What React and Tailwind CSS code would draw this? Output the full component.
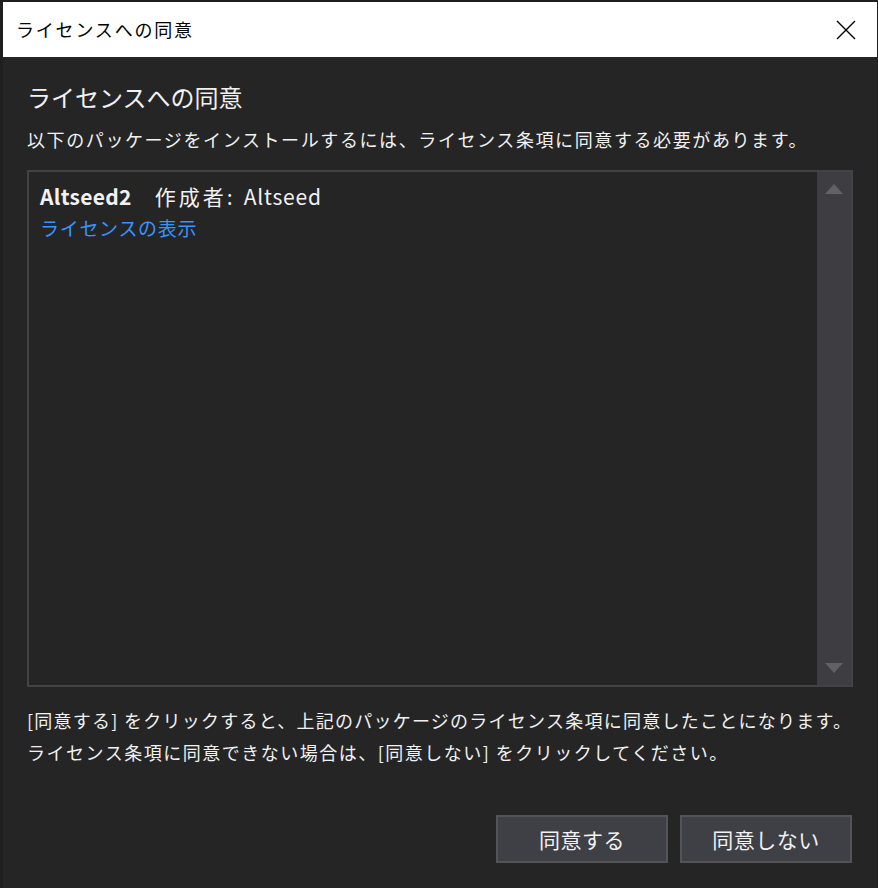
import React from 'react';

const jp = { fontFamily: '"Noto Sans CJK JP", "Noto Sans", sans-serif' };

const Triangle = ({ down }) => (
  <svg width="18" height="10" viewBox="0 0 18 10" className="block">
    <polygon points={down ? '0,0 18,0 9,10' : '9,0 18,10 0,10'} fill="#626266" />
  </svg>
);

const Button = ({ children }) => (
  <button className="w-[172px] h-[48px] bg-[#3f3f46] border-2 border-[#545458] text-[#f1f1f1] text-[21px] tracking-[0.5px] leading-none">
    {children}
  </button>
);

export default function App() {
  return (
    <div className="w-[878px] h-[888px] bg-[#1f1f1f] pt-[2px] pl-[3px] pr-[1px] overflow-hidden" style={jp}>
      <div className="flex flex-col h-full">
        <div className="h-[55px] bg-white flex items-center justify-between pl-[13px] pr-[21px]">
          <span className="text-[18px] text-black tracking-[1.8px]">ライセンスへの同意</span>
          <svg width="20" height="20" viewBox="0 0 20 20">
            <path d="M1 1 L19 19 M19 1 L1 19" stroke="#000" strokeWidth="1.4" />
          </svg>
        </div>

        <div className="flex-1 bg-[#252526] px-[24px] text-[#f1f1f1]">
          <h1 className="mt-[20px] h-[40px] leading-[40px] text-[24px] font-normal">ライセンスへの同意</h1>
          <p className="mt-[6px] h-[32px] leading-[32px] text-[18px] tracking-[1.6px] whitespace-nowrap">
            以下のパッケージをインストールするには、ライセンス条項に同意する必要があります。
          </p>

          <div className="mt-[15px] h-[517px] border-2 border-[#434346] flex">
            <div className="flex-1 pl-[11px] pt-[8px]">
              <div className="h-[32px] leading-[32px] text-[21px] whitespace-nowrap">
                <span className="font-bold tracking-[0.3px]">Altseed2</span>
                <span className="ml-[23px] tracking-[3px]">作成者:</span>
                <span className="ml-[8px] tracking-[0.8px]">Altseed</span>
              </div>
              <div className="h-[32px] leading-[32px] text-[19px] tracking-[0.7px] text-[#3794ff]">ライセンスの表示</div>
            </div>
            <div className="w-[34px] bg-[#3e3e42] flex flex-col items-center justify-between pt-[12px] pb-[12px]">
              <Triangle />
              <Triangle down />
            </div>
          </div>

          <div className="mt-[17px] text-[18px] leading-[32px] whitespace-nowrap">
            <p className="tracking-[1.25px]">[同意する] をクリックすると、上記のパッケージのライセンス条項に同意したことになります。</p>
            <p className="tracking-[1.5px]">ライセンス条項に同意できない場合は、[同意しない] をクリックしてください。</p>
          </div>

          <div className="mt-[47px] flex justify-end gap-[12px] pr-[1px]">
            <Button>同意する</Button>
            <Button>同意しない</Button>
          </div>
        </div>
      </div>
    </div>
  );
}
